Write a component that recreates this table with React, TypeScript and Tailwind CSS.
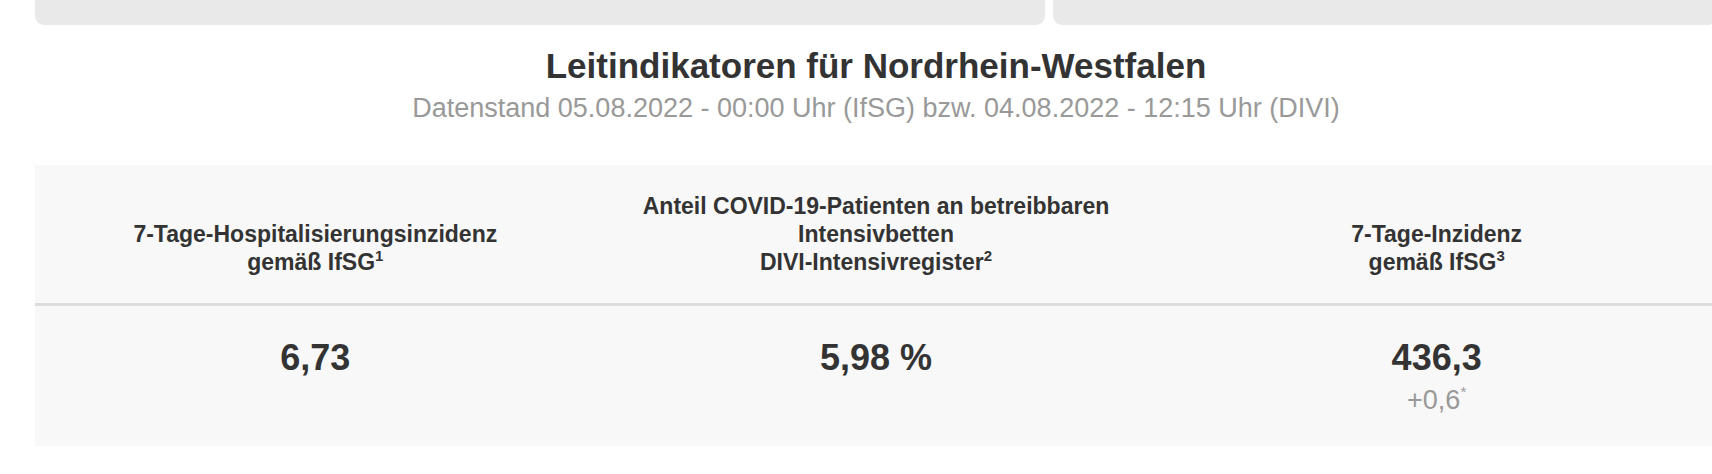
import React from "react";

const headers = [
  { lines: ["7-Tage-Hospitalisierungsinzidenz", "gemäß IfSG"], sup: "1" },
  {
    lines: ["Anteil COVID-19-Patienten an betreibbaren", "Intensivbetten", "DIVI-Intensivregister"],
    sup: "2",
  },
  { lines: ["7-Tage-Inzidenz", "gemäß IfSG"], sup: "3" },
];

const values: { value: string; sub?: string }[] = [
  { value: "6,73" },
  { value: "5,98 %" },
  { value: "436,3", sub: "+0,6" },
];

export default function App() {
  return (
    <div className="w-full min-h-screen overflow-hidden bg-white font-['Liberation_Sans',Arial,Helvetica,sans-serif]">
      <div className="ml-[35px] w-[1682px]">
        <div className="flex h-[25px] gap-[8px]">
          <div className="w-[1010px] rounded-b-[9px] bg-[#e9e9e9]" />
          <div className="flex-1 rounded-b-[9px] bg-[#e9e9e9]" />
        </div>

        <h1 className="mt-[21px] text-center text-[35px] font-bold leading-[40px] text-[#333333]">
          Leitindikatoren für Nordrhein-Westfalen
        </h1>
        <p className="mt-[6px] text-center text-[27px] leading-[32px] text-[#999999]">
          Datenstand 05.08.2022 - 00:00 Uhr (IfSG) bzw. 04.08.2022 - 12:15 Uhr (DIVI)
        </p>

        <div className="mt-[41px] bg-[#f8f8f8]">
          <div className="grid grid-cols-3 border-b-[3px] border-[#dcdcdc]">
            {headers.map((h, i) => (
              <div
                key={i}
                className="flex flex-col justify-end px-[10px] py-[27px] text-center text-[23px] font-bold leading-[28px] text-[#333333]"
              >
                {h.lines.map((l, j) => (
                  <div key={j}>
                    {l}
                    {j === h.lines.length - 1 && (
                      <sup className="relative top-[-9px] align-baseline text-[15px] leading-none">
                        {h.sup}
                      </sup>
                    )}
                  </div>
                ))}
              </div>
            ))}
          </div>
          <div className="grid grid-cols-3">
            {values.map((v, i) => (
              <div key={i} className="flex flex-col items-center pt-[32px] pb-[31px] text-center">
                <div className="text-[36px] font-bold leading-[40px] text-[#333333]">{v.value}</div>
                {v.sub ? (
                  <div className="mt-[7px] text-[27px] leading-[30px] text-[#999999]">
                    {v.sub}
                    <sup className="relative top-[-12px] align-baseline text-[15px] leading-none">*</sup>
                  </div>
                ) : (
                  <div className="mt-[7px] h-[30px]" />
                )}
              </div>
            ))}
          </div>
        </div>
      </div>
    </div>
  );
}
